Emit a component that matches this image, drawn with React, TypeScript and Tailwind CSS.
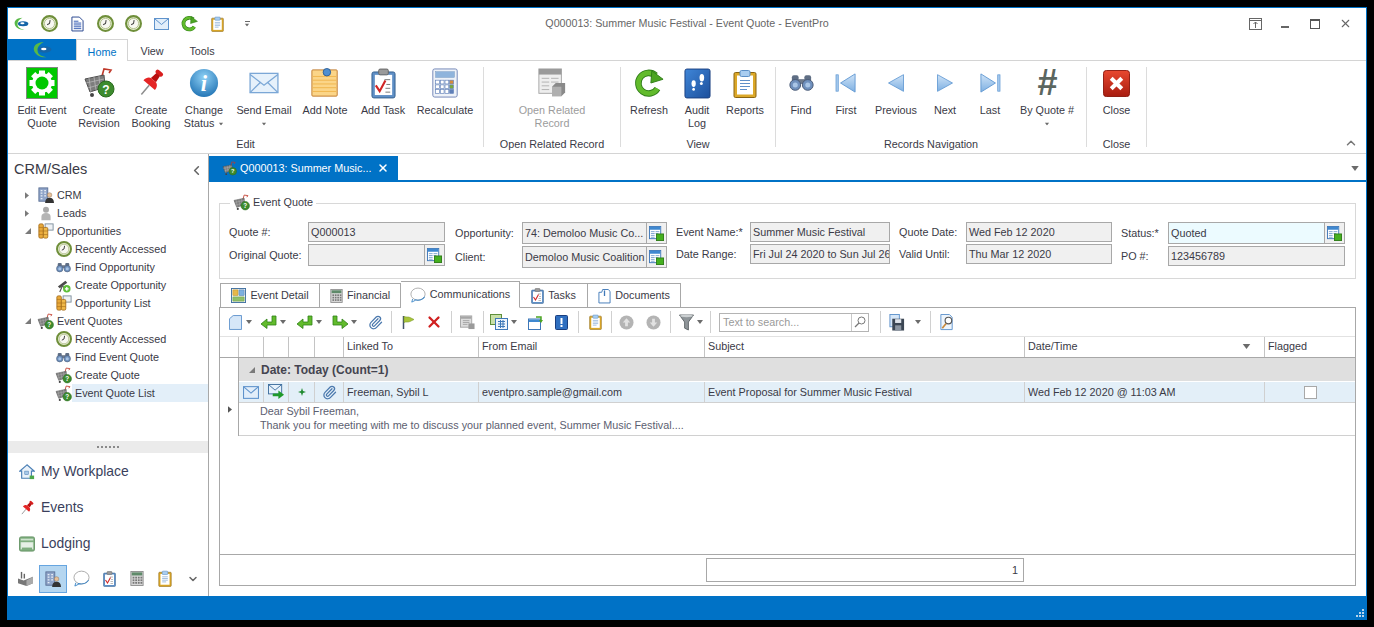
import { Paperclip, ChevronUp, ChevronDown, ChevronLeft, X } from 'lucide-react';

type IconProps = { c?: string };

const Caret = ({ c = '' }: IconProps) => (
  <svg viewBox="0 0 6 4" className={`w-[6px] h-[4px] ${c}`}><path d="M0 0h6L3 4z" fill="#6b6b6b" /></svg>
);

const Logo = ({ c }: IconProps) => (
  <svg viewBox="0 0 22 20" className={c}>
    <path d="M13 1C6 1 1 5 2 10c1 5 7 9 14 8-6-1-10-3-10-8 0-4 3-7 7-9z" fill="#58b947" />
    <ellipse cx="14" cy="9.500" rx="7.500" ry="3.600" fill="#1565a8" />
    <ellipse cx="13" cy="8.800" rx="3" ry="1.400" fill="#fff" />
  </svg>
);

const Clock = ({ c }: IconProps) => (
  <svg viewBox="0 0 16 16" className={c}>
    <circle cx="8" cy="8" r="7" fill="#e8eed6" stroke="#6f8f3a" strokeWidth="2" />
    <circle cx="8" cy="8" r="4.800" fill="#f8f8f2" stroke="#a3b577" strokeWidth=".7" />
    <path d="M8.600 4.800 8 8 5.800 9.200" stroke="#444" strokeWidth="1" fill="none" />
  </svg>
);

const DocLines = ({ c }: IconProps) => (
  <svg viewBox="0 0 14 16" className={c}>
    <path d="M1 .5h8l4 4v11H1z" fill="#fff" stroke="#1f3f8a" />
    <path d="M3 5h5M3 7h8M3 9h8M3 11h8M3 13h8" stroke="#2d55b0" />
  </svg>
);

const Mail = ({ c }: IconProps) => (
  <svg viewBox="0 0 28 22" className={c}>
    <rect x="1" y="2" width="26" height="18" fill="#e6f1fb" stroke="#7ba7d6" strokeWidth="1.2" />
    <path d="M1 3l13 10L27 3M1 20l10-10M27 20L17 10" fill="none" stroke="#7ba7d6" strokeWidth="1.2" />
  </svg>
);

const MailSmall = ({ c }: IconProps) => (
  <svg viewBox="0 0 15 12" className={c}>
    <rect x=".5" y=".5" width="14" height="11" fill="#e2eefa" stroke="#5f93cc" />
    <path d="M1 1l6.500 5.500L14 1" fill="none" stroke="#5f93cc" />
  </svg>
);

const Refresh = ({ c }: IconProps) => (
  <svg viewBox="0 0 32 32" className={c}>
    <path d="M25 22a11 11 0 1 1-2-14" fill="none" stroke="#2f7d18" strokeWidth="7" />
    <path d="M25 22a11 11 0 1 1-2-14" fill="none" stroke="#62bb2c" strokeWidth="5" />
    <path d="M19 3l12 9-13 4z" fill="#4ca522" stroke="#2f7d18" />
  </svg>
);

const Clip = ({ c }: IconProps) => (
  <svg viewBox="0 0 24 30" className={c}>
    <rect x="1" y="4" width="22" height="25" rx="1.5" fill="#dca828" stroke="#8a6410" />
    <rect x="4" y="7" width="16" height="19" fill="#fff" />
    <rect x="7" y="2" width="10" height="6" rx="1.5" fill="#a9cdf0" stroke="#5b8fc6" />
    <path d="M7 12h10M7 15h10M7 18h10M7 21h7" stroke="#5f8fc8" />
  </svg>
);

const Gear = ({ c }: IconProps) => (
  <svg viewBox="0 0 32 32" className={c}>
    <rect x=".5" y=".5" width="31" height="31" fill="#00c800" stroke="#7d8a7d" />
    {[0, 45, 90, 135, 180, 225, 270, 315].map((a) => (
      <rect key={a} x="13" y="3.5" width="6" height="6" fill="#fff" transform={`rotate(${a} 16 16)`} />
    ))}
    <circle cx="16" cy="16" r="10" fill="#fff" />
    <circle cx="16" cy="16" r="6.5" fill="#00c800" />
  </svg>
);

const Cart = ({ c }: IconProps) => (
  <svg viewBox="0 0 32 32" className={c}>
    <path d="M19 9l2-7 7 1-2 3" fill="none" stroke="#c0392b" strokeWidth="1.6" />
    <path d="M2 12l19-4 1 12-15 5z" fill="#7d7d7d" stroke="#4f4f4f" />
    <path d="M6 11l2 14M11 10l2 13M16 9l1 12M3 16l18-4M5 21l17-5" stroke="#bdbdbd" strokeWidth=".7" />
    <circle cx="9" cy="28" r="2" fill="#444" />
    <circle cx="23" cy="22" r="8" fill="#3d8b2e" stroke="#2a6a1e" />
    <text x="23" y="26.5" fontSize="12" fontWeight="700" textAnchor="middle" fill="#fff" fontFamily="Liberation Sans">?</text>
  </svg>
);

const Pin = ({ c }: IconProps) => (
  <svg viewBox="0 0 32 32" className={c}>
    <g transform="rotate(40 16 16)">
      <path d="M16 19v13" stroke="#8d8d8d" strokeWidth="1.6" />
      <rect x="11.5" y="0" width="9" height="4.5" rx="2" fill="#d81e1e" />
      <path d="M13.5 4h5l1 8h-7z" fill="#b80f0f" />
      <path d="M8 19c0-5 3-7 5-7h6c2 0 5 2 5 7z" fill="#e52525" />
    </g>
  </svg>
);

const Info = ({ c }: IconProps) => (
  <svg viewBox="0 0 32 32" className={c}>
    <defs>
      <radialGradient id="infoG" cx=".5" cy=".3" r=".8">
        <stop offset="0" stopColor="#8ed0f5" />
        <stop offset="1" stopColor="#1569ad" />
      </radialGradient>
    </defs>
    <circle cx="16" cy="16" r="15" fill="url(#infoG)" />
    <text x="16" y="25" fontSize="24" fontWeight="700" fontStyle="italic" textAnchor="middle" fill="#fff" fontFamily="Liberation Serif">i</text>
  </svg>
);

const Note = ({ c }: IconProps) => (
  <svg viewBox="0 0 30 32" className={c}>
    <rect x="1" y="2" width="27" height="28" rx="1" fill="#fbd588" stroke="#c07a2c" />
    <path d="M2 9h25M2 13h25M2 17h25M2 21h25M2 25h25" stroke="#efb44c" />
    <circle cx="17" cy="4.5" r="4" fill="#4f8fd0" stroke="#2f5f95" />
  </svg>
);

const Task = ({ c }: IconProps) => (
  <svg viewBox="0 0 26 32" className={c}>
    <rect x="1" y="4" width="24" height="27" rx="2" fill="#5f8fc6" stroke="#34608f" />
    <rect x="4" y="7" width="18" height="21" fill="#fff" />
    <rect x="8" y="1" width="10" height="6" rx="1.5" fill="#9a9a9a" stroke="#666" />
    <path d="M5 18l4 6 6-11" fill="none" stroke="#d02525" strokeWidth="2.2" />
    <path d="M14 12h6M16 17h4M15 21h5M15 25h5" stroke="#777" />
  </svg>
);

const Calc = ({ c }: IconProps) => (
  <svg viewBox="0 0 28 32" className={c}>
    <rect x="1" y="1" width="26" height="30" rx="2" fill="#eef2f8" stroke="#6f83b5" />
    <rect x="4" y="4" width="20" height="6" fill="#8fb4dc" stroke="#6f93bd" strokeWidth=".5" />
    {[13, 18, 23].map((y) =>
      [4, 9, 14, 19].map((x) => (
        <rect key={`${x}-${y}`} x={x} y={y} width="4" height="4" fill={x === 19 ? (y === 13 ? '#d78a3a' : y === 18 ? '#7aa83a' : '#5f7fb8') : '#fff'} stroke="#5f7fb8" strokeWidth=".7" />
      ))
    )}
  </svg>
);

const OpenRelated = ({ c }: IconProps) => (
  <svg viewBox="0 0 30 32" className={c}>
    <rect x="1" y="1" width="24" height="26" fill="#eee" stroke="#a5a5a5" />
    <rect x="1" y="1" width="24" height="6" fill="#9a9a9a" />
    <path d="M4 11h8M14 11h8M4 15h8M14 15h8M4 19h8M4 23h8" stroke="#b0b0b0" />
    <path d="M15 20l4-4h10v10l-4 4H15z" fill="#8a8a8a" />
    <path d="M15 20h10v10H15z" fill="#b0b0b0" />
  </svg>
);

const Audit = ({ c }: IconProps) => (
  <svg viewBox="0 0 28 32" className={c}>
    <defs>
      <linearGradient id="auditG" x1="0" y1="0" x2="1" y2="1">
        <stop offset="0" stopColor="#3f86d8" />
        <stop offset="1" stopColor="#1c4f9c" />
      </linearGradient>
    </defs>
    <rect x="1" y="1" width="26" height="30" rx="2" fill="url(#auditG)" stroke="#1a3f80" />
    <ellipse cx="18.5" cy="10" rx="2.4" ry="3.8" fill="#fff" />
    <ellipse cx="18" cy="16" rx="1.5" ry="1.6" fill="#fff" />
    <ellipse cx="10" cy="16" rx="2.2" ry="3.5" fill="#fff" />
    <ellipse cx="10" cy="22" rx="1.4" ry="1.6" fill="#fff" />
  </svg>
);

const Binoculars = ({ c }: IconProps) => (
  <svg viewBox="0 0 26 18" className={c}>
    <rect x="3" y="1" width="7" height="7" rx="2" fill="#5f6e84" />
    <rect x="16" y="1" width="7" height="7" rx="2" fill="#5f6e84" />
    <rect x="9" y="5" width="8" height="5" fill="#6e7a8c" />
    <circle cx="6.5" cy="11" r="5.6" fill="#6f90bd" stroke="#4a5a75" />
    <circle cx="19.5" cy="11" r="5.6" fill="#6f90bd" stroke="#4a5a75" />
    <circle cx="6.5" cy="11" r="2.6" fill="#a9c5e6" />
    <circle cx="19.5" cy="11" r="2.6" fill="#a9c5e6" />
  </svg>
);

const Tri = ({ dir, bar, c }: IconProps & { dir: 'l' | 'r'; bar?: boolean }) => (
  <svg viewBox="0 0 24 22" className={c}>
    <defs>
      <linearGradient id="triG" x1="0" y1="0" x2="0" y2="1">
        <stop offset="0" stopColor="#cfe3f7" />
        <stop offset="1" stopColor="#7eb0e2" />
      </linearGradient>
    </defs>
    {dir === 'l' ? (
      <>
        {bar && <rect x="1" y="2" width="2.5" height="18" fill="#a9cbee" stroke="#5f97d2" strokeWidth=".8" />}
        <path d={bar ? 'M22 1v20L6 11z' : 'M21 1v20L3 11z'} fill="url(#triG)" stroke="#5f97d2" />
      </>
    ) : (
      <>
        {bar && <rect x="20.5" y="2" width="2.5" height="18" fill="#a9cbee" stroke="#5f97d2" strokeWidth=".8" />}
        <path d={bar ? 'M2 1v20l16-10z' : 'M3 1v20l18-10z'} fill="url(#triG)" stroke="#5f97d2" />
      </>
    )}
  </svg>
);

const CloseRed = ({ c }: IconProps) => (
  <svg viewBox="0 0 28 28" className={c}>
    <defs>
      <linearGradient id="closeG" x1="0" y1="0" x2="0" y2="1">
        <stop offset="0" stopColor="#e8482f" />
        <stop offset="1" stopColor="#a81c10" />
      </linearGradient>
    </defs>
    <rect x=".5" y=".5" width="27" height="27" rx="3" fill="url(#closeG)" stroke="#8e1a10" />
    <path d="M8.5 8.5l11 11M19.5 8.5l-11 11" stroke="#fff" strokeWidth="4.2" />
  </svg>
);

const Lookup = ({ c }: IconProps) => (
  <svg viewBox="0 0 16 16" className={c}>
    <rect x=".5" y=".5" width="12" height="13" fill="#fff" stroke="#3f78b8" />
    <rect x="1" y="1" width="11" height="3" fill="#3f88d0" />
    <path d="M2 6h4M7 6h4M2 8h4M7 8h3M2 10h4M2 12h4" stroke="#7da4d0" />
    <rect x="8" y="8.5" width="7.5" height="7" fill="#45b01f" stroke="#2f7d18" />
  </svg>
);

const Crm = ({ c }: IconProps) => (
  <svg viewBox="0 0 18 18" className={c}>
    <rect x="1" y="1" width="10" height="15" fill="#8fa4c8" stroke="#5a6f95" />
    <path d="M3 4h2M7 4h2M3 7h2M7 7h2M3 10h2M7 10h2M3 13h2" stroke="#e7edf6" strokeWidth="1.4" />
    <circle cx="13" cy="9" r="2.6" fill="#e6c09a" stroke="#8a6a4a" strokeWidth=".5" />
    <path d="M8 18c0-4 2-6 5-6s5 2 5 6z" fill="#333" />
  </svg>
);

const Lead = ({ c }: IconProps) => (
  <svg viewBox="0 0 14 18" className={c}>
    <circle cx="7" cy="4.500" r="3.600" fill="#a9a9a9" />
    <path d="M1.500 17v-4c0-3 2-4.500 5.500-4.500S12.500 10 12.500 13v4z" fill="#b5b5b5" />
  </svg>
);

const Opp = ({ c }: IconProps) => (
  <svg viewBox="0 0 18 18" className={c}>
    <rect x="8" y="1" width="9" height="7" fill="#eef1f4" stroke="#7a8a99" />
    <rect x="1" y="1" width="5" height="16" rx="1.500" fill="#e9a93a" stroke="#a8701c" />
    <rect x="6" y="5" width="5" height="12" rx="1.500" fill="#f0b94a" stroke="#a8701c" />
    <path d="M1 5h5M1 9h5M1 13h5M6 9h5M6 13h5" stroke="#a8701c" strokeWidth=".7" />
  </svg>
);

const CreateOpp = ({ c }: IconProps) => (
  <svg viewBox="0 0 16 16" className={c}>
    <path d="M2 9l8-6 2 2-8 6z" fill="#4a4a4a" />
    <path d="M7 8l-3 7M7 8l3 5" stroke="#555" strokeWidth="1.200" />
    <circle cx="11.500" cy="11.500" r="4" fill="#5fbf3a" />
    <path d="M9.500 11.500h4M11.500 9.500v4" stroke="#fff" strokeWidth="1.400" />
  </svg>
);

const House = ({ c }: IconProps) => (
  <svg viewBox="0 0 18 18" className={c}>
    <path d="M9 1L1 8h2v8h11V8h3z" fill="#eaf2fa" stroke="#4a7fb5" strokeWidth="1.300" />
    <rect x="6.500" y="8" width="4" height="4" fill="#a9c9e8" stroke="#4a7fb5" strokeWidth=".6" />
    <rect x="12" y="13" width="5" height="4" fill="#4ca84a" />
  </svg>
);

const Lodging = ({ c }: IconProps) => (
  <svg viewBox="0 0 18 18" className={c}>
    <rect x=".5" y="1" width="17" height="16" rx="2" fill="#7fae7f" stroke="#5f8f5f" />
    <rect x="2" y="3" width="14" height="2" fill="#cfe3cf" />
    <rect x="3" y="7" width="12" height="6" fill="#e6f0e6" />
    <rect x="2" y="7" width="1" height="8" fill="#fff" />
    <rect x="15" y="7" width="1" height="8" fill="#fff" />
  </svg>
);

const Factory = ({ c }: IconProps) => (
  <svg viewBox="0 0 18 16" className={c}>
    <rect x="4" y="1" width="1.500" height="7" fill="#666" />
    <rect x="7" y="3" width="1.500" height="5" fill="#666" />
    <path d="M1 8l6 2 10-4v7l-7 3-9-3z" fill="#777" />
    <path d="M10 10l7-4v7l-7 3z" fill="#aaa" />
  </svg>
);

const Bubble = ({ c }: IconProps) => (
  <svg viewBox="0 0 18 18" className={c}>
    <ellipse cx="9" cy="8" rx="8" ry="6.800" fill="#fff" stroke="#a8a8a8" />
    <path d="M3 13.500l-1 3.500 4-2" fill="#fff" stroke="#3f88c8" />
    <path d="M5 14.400c4 1 9 0 11.500-3.500" fill="none" stroke="#3f88c8" strokeWidth="1.200" />
  </svg>
);

const CalcGray = ({ c }: IconProps) => (
  <svg viewBox="0 0 16 18" className={c}>
    <rect x="1" y="1" width="14" height="16" fill="#d7d7d7" stroke="#8a8a8a" />
    <rect x="2" y="2" width="12" height="3.500" fill="#5f8a6a" />
    {[7, 10, 13].map((y) =>
      [3, 6, 9, 12].map((x) => <rect key={`${x}-${y}`} x={x} y={y} width="2" height="2" fill="#777" />)
    )}
  </svg>
);

const Detail = ({ c }: IconProps) => (
  <svg viewBox="0 0 16 16" className={c}>
    <rect x=".5" y=".5" width="15" height="15" fill="#fff" stroke="#3f6f9f" />
    <rect x="2" y="2" width="5.500" height="6" fill="#e6b84a" stroke="#a8801c" strokeWidth=".5" />
    <rect x="8.500" y="2" width="5.500" height="6" fill="#7db0e0" stroke="#3f6f9f" strokeWidth=".5" />
    <rect x="2" y="9.500" width="12" height="4.500" fill="#8fc06a" stroke="#5f8f3a" strokeWidth=".5" />
  </svg>
);

const Documents = ({ c }: IconProps) => (
  <svg viewBox="0 0 14 16" className={c}>
    <path d="M1 4h3l1-3h6l2 2v12.500H1z" fill="#fff" stroke="#3f78b8" />
    <path d="M7 2v6" stroke="#3f78b8" strokeWidth="1.400" />
  </svg>
);

const Reply = ({ c, forward }: IconProps & { forward?: boolean }) => (
  <svg viewBox="0 0 18 14" className={c}>
    <path
      d={forward ? 'M17 9l-6-5v3H6V1H2v9h9v3.500z' : 'M1 9l6-5v3h5V1h4v9H7v3.500z'}
      fill="#62bb2c"
      stroke="#2f8018"
      strokeWidth=".8"
    />
  </svg>
);

const NewDoc = ({ c }: IconProps) => (
  <svg viewBox="0 0 14 16" className={c}>
    <path d="M.5 4l4-3.500h9v15H.5z" fill="#d6e7f8" stroke="#5f93cc" />
  </svg>
);

const Flag = ({ c }: IconProps) => (
  <svg viewBox="0 0 14 14" className={c}>
    <path d="M2.500 1v13" stroke="#44546a" strokeWidth="1.500" />
    <path d="M3 1.500c3 1 4 0 6 1l4 2-4 2c-2 1-4 0-6 1z" fill="#a9c53a" stroke="#7c9a2a" strokeWidth=".6" />
  </svg>
);

const GrayDoc = ({ c }: IconProps) => (
  <svg viewBox="0 0 16 16" className={c}>
    <rect x=".5" y="1" width="12" height="12" fill="#ddd" stroke="#a5a5a5" />
    <rect x="1" y="1.500" width="11" height="2.500" fill="#a5a5a5" />
    <path d="M3 6h7M3 8h7M3 10h5" stroke="#a5a5a5" />
    <rect x="9" y="9" width="6.500" height="6" fill="#9a9a9a" />
  </svg>
);

const GridGreen = ({ c }: IconProps) => (
  <svg viewBox="0 0 18 16" className={c}>
    <rect x=".5" y=".5" width="11" height="10" fill="#c9e0a8" stroke="#5f8f3a" />
    <rect x="5.500" y="4.500" width="12" height="11" fill="#eef5fc" stroke="#3f78b8" />
    <path d="M8 7.500h7M8 10h7M8 12.500h7M10.500 6v8M13 6v8" stroke="#3f78b8" />
  </svg>
);

const RestoreWin = ({ c }: IconProps) => (
  <svg viewBox="0 0 16 16" className={c}>
    <rect x=".5" y="5" width="12" height="10.500" fill="#fff" stroke="#3f78b8" />
    <rect x="1" y="5.500" width="11" height="2.500" fill="#3f88d0" />
    <path d="M8 3h5v4" fill="none" stroke="#4ca522" strokeWidth="1.500" />
    <path d="M11 6h4l-2 3z" fill="#4ca522" />
  </svg>
);

const BookExcl = ({ c }: IconProps) => (
  <svg viewBox="0 0 13 15" className={c}>
    <rect x=".5" y=".5" width="12" height="14" rx="1" fill="#2f6fc0" stroke="#1a3f80" />
    <rect x="5.500" y="3" width="2" height="6" fill="#fff" />
    <rect x="5.500" y="10" width="2" height="2" fill="#fff" />
  </svg>
);

const RoundArrow = ({ up, c }: IconProps & { up?: boolean }) => (
  <svg viewBox="0 0 16 16" className={c}>
    <circle cx="8" cy="8" r="7.500" fill="#b4b4b4" />
    <path d={up ? 'M8 3.500L4 8h2.500v4h3V8H12z' : 'M8 12.500L4 8h2.500V4h3v4H12z'} fill="#e2e2e2" />
  </svg>
);

const Funnel = ({ c }: IconProps) => (
  <svg viewBox="0 0 16 18" className={c}>
    <path d="M.5 1h15L10 8.500V17l-4-2V8.500z" fill="#8f9599" stroke="#5f6569" />
    <ellipse cx="8" cy="2" rx="7" ry="1.300" fill="#ccd0d2" />
  </svg>
);

const Save = ({ c }: IconProps) => (
  <svg viewBox="0 0 16 18" className={c}>
    <rect x=".5" y=".5" width="10" height="13" fill="#d6e7f8" stroke="#5f93cc" />
    <rect x="3" y="5" width="12.500" height="12.500" fill="#3b4654" />
    <rect x="6" y="5.500" width="6.500" height="4" fill="#dfe4ea" />
    <rect x="6" y="12" width="6.500" height="5.500" fill="#8c96a2" />
  </svg>
);

const SearchDoc = ({ c }: IconProps) => (
  <svg viewBox="0 0 14 18" className={c}>
    <path d="M.5.500h9l3 3v13H.500z" fill="#eef5fc" stroke="#5f93cc" />
    <circle cx="8.500" cy="7" r="3.500" fill="#fff" stroke="#555" strokeWidth="1.200" />
    <path d="M6 10l-4 5" stroke="#c98a3c" strokeWidth="1.800" />
  </svg>
);

const Magnifier = ({ c }: IconProps) => (
  <svg viewBox="0 0 12 12" className={c}>
    <circle cx="7.500" cy="4.500" r="3.500" fill="none" stroke="#777" />
    <path d="M5 7L1 11" stroke="#777" strokeWidth="1.200" />
  </svg>
);

const MailArrow = ({ c }: IconProps) => (
  <svg viewBox="0 0 18 17" className={c}>
    <rect x=".5" y=".5" width="14" height="10" fill="#e6f1fb" stroke="#3f6f9f" />
    <path d="M1 1l6.500 5.500L14 1" fill="none" stroke="#3f6f9f" />
    <path d="M5 10h6V7l6 4.500-6 4.500v-3H5z" fill="#1f9a2a" />
  </svg>
);

const Spark = ({ c }: IconProps) => (
  <svg viewBox="0 0 8 8" className={c}>
    <path d="M4 0l1 3 3 1-3 1-1 3-1-3-3-1 3-1z" fill="#1f8a2f" />
  </svg>
);

function RibbonItem({ w, icon, label, dim, caret }: { w: string; icon: React.ReactNode; label: string[]; dim?: boolean; caret?: boolean }) {
  return (
    <div className={`${w} flex flex-col items-center shrink-0`}>
      <div className="h-[32px] flex items-center justify-center">{icon}</div>
      <div className={`mt-[5px] text-center leading-[13px] ${dim ? 'text-[#9c9c9c]' : ''}`}>
        {label.map((l, i) => (
          <div key={l} className="whitespace-nowrap flex items-center justify-center gap-[4px]">
            {l}
            {caret && label.length === 2 && i === 1 && <Caret c="scale-75" />}
          </div>
        ))}
        {caret && label.length === 1 && (
          <div className="h-[13px] flex items-center justify-center"><Caret c="scale-75" /></div>
        )}
      </div>
    </div>
  );
}

function RibbonGroup({ w, label, children }: { w: string; label: string; children: React.ReactNode }) {
  return (
    <div className={`${w} h-[80px] border-r border-[#dcdcdc] flex flex-col shrink-0`}>
      <div className="h-[70px] flex shrink-0">{children}</div>
      <div className="h-[14px] leading-[14px] text-center whitespace-nowrap shrink-0">{label}</div>
    </div>
  );
}

function TreeRow({ level, icon, label, arrow, selected }: { level: 1 | 2; icon: React.ReactNode; label: string; arrow?: 'open' | 'closed'; selected?: boolean }) {
  return (
    <div className={`h-[18px] flex items-center ${level === 1 ? 'pl-[17px]' : 'pl-[47px]'}`}>
      {level === 1 && (
        <div className="w-[12px] flex justify-start">
          {arrow === 'closed' ? (
            <svg viewBox="0 0 5 8" className="w-[4px] h-[7px]"><path d="M0 0l5 4-5 4z" fill="#7a7a7a" /></svg>
          ) : (
            <svg viewBox="0 0 7 7" className="w-[6px] h-[6px]"><path d="M7 0v7H0z" fill="#7a7a7a" /></svg>
          )}
        </div>
      )}
      <div className="w-[17px] h-[17px] flex items-center justify-center shrink-0">{icon}</div>
      <div className={`h-[18px] leading-[18px] flex-1 pl-[3px] ${selected ? 'bg-[#e3eff9]' : ''}`}>{label}</div>
    </div>
  );
}

function Field({ label, value, lw, iw, h, button, tint }: { label: string; value?: string; lw: string; iw: string; h: string; button?: boolean; tint?: boolean }) {
  return (
    <div className="flex items-center">
      <div className={`${lw} shrink-0 whitespace-nowrap`}>{label}</div>
      <div className={`${iw} ${h} shrink-0 flex items-stretch border border-[#a8a8a8] ${tint ? 'bg-[#ecfbff]' : 'bg-[#f0f0f0]'}`}>
        <div className="flex-1 min-w-0 px-[2px] flex items-center overflow-hidden whitespace-nowrap">{value}</div>
        {button && (
          <div className="w-[20px] border-l border-[#a8a8a8] bg-[#f0f0f0] flex items-center justify-center">
            <Lookup c="w-[15px] h-[15px]" />
          </div>
        )}
      </div>
    </div>
  );
}

function PageTab({ w, icon, label, active }: { w: string; icon: React.ReactNode; label: string; active?: boolean }) {
  return (
    <div className={`${w} flex items-center justify-center gap-[4px] border border-[#a8a8a8] border-l-0 first:border-l ${active ? 'h-[27px] -mb-px bg-white border-b-white relative' : 'h-[24px] border-b-0'}`}>
      {icon}
      <span className="whitespace-nowrap">{label}</span>
    </div>
  );
}

const Sep = ({ c = '' }: IconProps) => <div className={`w-px h-[22px] bg-[#d0d0d0] shrink-0 ${c}`} />;

function HeadCell({ w, label, children }: { w: string; label?: string; children?: React.ReactNode }) {
  return (
    <div className={`${w} h-full border-r border-[#c4c4c4] flex items-center pl-[3px] pb-[2px] shrink-0`}>
      {label}
      {children}
    </div>
  );
}

function DataCell({ w, children, center }: { w: string; children?: React.ReactNode; center?: boolean }) {
  return (
    <div className={`${w} h-full border-r border-[#d0d0d0] flex items-center shrink-0 whitespace-nowrap ${center ? 'justify-center' : 'pl-[3px]'}`}>
      {children}
    </div>
  );
}

export default function App() {
  return (
    <div className="w-[1374px] h-[627px] bg-black p-[7px] overflow-hidden font-['Liberation_Sans',sans-serif] text-[10.8px] text-[#3a3a46]">
      <div className="h-[613px] bg-white border-x border-t border-[#0072c6] flex flex-col">
        {/* Title bar */}
        <div className="h-[31px] flex items-center shrink-0">
          <div className="w-[260px] flex items-center pl-[5px]">
            <div className="w-[16px] flex justify-center"><Logo c="w-[16px] h-[14px]" /></div>
            <div className="w-[28px] ml-[6px] flex justify-center"><Clock c="w-[17px] h-[17px]" /></div>
            <div className="w-[28px] flex justify-center"><DocLines c="w-[13px] h-[16px]" /></div>
            <div className="w-[28px] flex justify-center"><Clock c="w-[17px] h-[17px]" /></div>
            <div className="w-[28px] flex justify-center"><Clock c="w-[17px] h-[17px]" /></div>
            <div className="w-[28px] flex justify-center"><MailSmall c="w-[15px] h-[12px]" /></div>
            <div className="w-[28px] flex justify-center"><Refresh c="w-[17px] h-[17px]" /></div>
            <div className="w-[28px] flex justify-center"><Clip c="w-[13px] h-[16px]" /></div>
            <div className="w-[32px] flex flex-col items-center gap-[1px]">
              <div className="w-[5px] h-px bg-[#6b6b6b]" />
              <Caret c="scale-75" />
            </div>
          </div>
          <div className="flex-1 text-center text-[10.7px] text-[#666] whitespace-nowrap">Q000013: Summer Music Festival - Event Quote - EventPro</div>
          <div className="w-[260px] flex items-center justify-end pr-[6px] text-[#666]">
            <div className="w-[30px] flex justify-center">
              <svg viewBox="0 0 13 12" className="w-[13px] h-[12px]">
                <rect x=".5" y=".5" width="12" height="11" fill="none" stroke="#666" />
                <path d="M.5 2.500h12M6.500 10V4M4.500 6l2-2 2 2" fill="none" stroke="#666" />
              </svg>
            </div>
            <div className="w-[30px] flex justify-center pt-[6px]"><div className="w-[8px] h-[2px] bg-[#666]" /></div>
            <div className="w-[30px] flex justify-center">
              <div className="w-[10px] h-[10px] border border-t-2 border-[#555]" />
            </div>
            <div className="w-[30px] flex justify-center"><X className="w-[13px] h-[13px]" strokeWidth={2} /></div>
          </div>
        </div>

        {/* Ribbon tabs */}
        <div className="h-[22px] flex border-b border-[#d4d4d4] shrink-0">
          <div className="w-[68px] bg-[#0072c6] flex items-center justify-center"><Logo c="w-[22px] h-[18px]" /></div>
          <div className="w-[52px] h-[22px] pt-[3px] bg-white border-x border-t border-[#d4d4d4] flex items-center justify-center text-[#0072c6]">Home</div>
          <div className="w-[48px] pt-[3px] flex items-center justify-center">View</div>
          <div className="w-[52px] pt-[3px] flex items-center justify-center">Tools</div>
        </div>

        {/* Ribbon */}
        <div className="h-[93px] border-b border-[#d4d4d4] pt-[6px] flex shrink-0">
          <RibbonGroup w="w-[476px]" label="Edit">
            <RibbonItem w="w-[68px]" icon={<Gear c="w-[32px] h-[32px]" />} label={['Edit Event', 'Quote']} />
            <RibbonItem w="w-[46px]" icon={<Cart c="w-[32px] h-[32px]" />} label={['Create', 'Revision']} />
            <RibbonItem w="w-[58px]" icon={<Pin c="w-[30px] h-[32px]" />} label={['Create', 'Booking']} />
            <RibbonItem w="w-[48px]" icon={<Info c="w-[30px] h-[30px]" />} label={['Change', 'Status']} caret />
            <RibbonItem w="w-[72px]" icon={<Mail c="w-[30px] h-[24px]" />} label={['Send Email']} caret />
            <RibbonItem w="w-[50px]" icon={<Note c="w-[30px] h-[30px]" />} label={['Add Note']} />
            <RibbonItem w="w-[66px]" icon={<Task c="w-[25px] h-[31px]" />} label={['Add Task']} />
            <RibbonItem w="w-[58px]" icon={<Calc c="w-[28px] h-[30px]" />} label={['Recalculate']} />
          </RibbonGroup>
          <RibbonGroup w="w-[137px]" label="Open Related Record">
            <RibbonItem w="w-[136px]" icon={<OpenRelated c="w-[30px] h-[30px]" />} label={['Open Related', 'Record']} dim />
          </RibbonGroup>
          <RibbonGroup w="w-[155px]" label="View">
            <RibbonItem w="w-[56px]" icon={<Refresh c="w-[30px] h-[30px]" />} label={['Refresh']} />
            <RibbonItem w="w-[40px]" icon={<Audit c="w-[27px] h-[31px]" />} label={['Audit', 'Log']} />
            <RibbonItem w="w-[56px]" icon={<Clip c="w-[24px] h-[31px]" />} label={['Reports']} />
          </RibbonGroup>
          <RibbonGroup w="w-[311px]" label="Records Navigation">
            <RibbonItem w="w-[50px]" icon={<Binoculars c="w-[25px] h-[18px]" />} label={['Find']} />
            <RibbonItem w="w-[40px]" icon={<Tri dir="l" bar c="w-[22px] h-[20px]" />} label={['First']} />
            <RibbonItem w="w-[60px]" icon={<Tri dir="l" c="w-[20px] h-[20px]" />} label={['Previous']} />
            <RibbonItem w="w-[38px]" icon={<Tri dir="r" c="w-[20px] h-[20px]" />} label={['Next']} />
            <RibbonItem w="w-[52px]" icon={<Tri dir="r" bar c="w-[22px] h-[20px]" />} label={['Last']} />
            <RibbonItem w="w-[62px]" icon={<span className="text-[36px] leading-[32px] font-bold italic text-[#5b6660]">#</span>} label={['By Quote #']} caret />
          </RibbonGroup>
          <RibbonGroup w="w-[60px]" label="Close">
            <RibbonItem w="w-[59px]" icon={<CloseRed c="w-[27px] h-[27px]" />} label={['Close']} />
          </RibbonGroup>
          <div className="flex-1 flex justify-end items-end pr-[8px] pb-[3px]">
            <ChevronUp className="w-[14px] h-[14px] text-[#777]" strokeWidth={2.5} />
          </div>
        </div>

        <div className="flex-1 flex min-h-0">
          {/* Sidebar */}
          <div className="w-[201px] border-r border-[#a8a8a8] flex flex-col shrink-0">
            <div className="h-[32px] flex items-center justify-between pl-[6px] pr-[4px] text-[14.5px]">
              <span>CRM/Sales</span>
              <ChevronLeft className="w-[15px] h-[15px] text-[#666]" strokeWidth={2.5} />
            </div>
            <div className="flex-1">
              <TreeRow level={1} arrow="closed" icon={<Crm c="w-[16px] h-[16px]" />} label="CRM" />
              <TreeRow level={1} arrow="closed" icon={<Lead c="w-[12px] h-[15px]" />} label="Leads" />
              <TreeRow level={1} arrow="open" icon={<Opp c="w-[16px] h-[16px]" />} label="Opportunities" />
              <TreeRow level={2} icon={<Clock c="w-[16px] h-[16px]" />} label="Recently Accessed" />
              <TreeRow level={2} icon={<Binoculars c="w-[15px] h-[11px]" />} label="Find Opportunity" />
              <TreeRow level={2} icon={<CreateOpp c="w-[15px] h-[15px]" />} label="Create Opportunity" />
              <TreeRow level={2} icon={<Opp c="w-[16px] h-[16px]" />} label="Opportunity List" />
              <TreeRow level={1} arrow="open" icon={<Cart c="w-[17px] h-[17px]" />} label="Event Quotes" />
              <TreeRow level={2} icon={<Clock c="w-[16px] h-[16px]" />} label="Recently Accessed" />
              <TreeRow level={2} icon={<Binoculars c="w-[15px] h-[11px]" />} label="Find Event Quote" />
              <TreeRow level={2} icon={<Cart c="w-[17px] h-[17px]" />} label="Create Quote" />
              <TreeRow level={2} icon={<Cart c="w-[17px] h-[17px]" />} label="Event Quote List" selected />
            </div>
            <div className="h-[12px] bg-[#ebebeb] flex items-center justify-center gap-[2px] shrink-0">
              {[0, 1, 2, 3, 4, 5].map((i) => (
                <div key={i} className="w-[2px] h-[2px] bg-[#8a8a8a]" />
              ))}
            </div>
            <div className="text-[13.9px] text-[#3a3f5c]">
              <div className="h-[36px] flex items-center pl-[11px] pt-[1px] gap-[6px]"><House c="w-[16px] h-[16px]" />My Workplace</div>
              <div className="h-[36px] flex items-center pl-[11px] pt-[1px] gap-[6px]"><Pin c="w-[16px] h-[16px]" />Events</div>
              <div className="h-[36px] flex items-center pl-[11px] pt-[1px] gap-[6px]"><Lodging c="w-[16px] h-[16px]" />Lodging</div>
            </div>
            <div className="h-[35px] flex items-center pl-[3px] shrink-0">
              <div className="w-[28px] h-[28px] flex items-center justify-center"><Factory c="w-[17px] h-[15px]" /></div>
              <div className="w-[28px] h-[28px] flex items-center justify-center bg-[#b5d6f0] border border-[#66a5e0]"><Crm c="w-[16px] h-[16px]" /></div>
              <div className="w-[28px] h-[28px] flex items-center justify-center"><Bubble c="w-[17px] h-[17px]" /></div>
              <div className="w-[28px] h-[28px] flex items-center justify-center"><Task c="w-[13px] h-[16px]" /></div>
              <div className="w-[28px] h-[28px] flex items-center justify-center"><CalcGray c="w-[14px] h-[17px]" /></div>
              <div className="w-[28px] h-[28px] flex items-center justify-center"><Clip c="w-[14px] h-[17px]" /></div>
              <div className="w-[28px] h-[28px] flex items-center justify-center"><ChevronDown className="w-[12px] h-[12px] text-[#666]" strokeWidth={3} /></div>
            </div>
          </div>

          {/* Content */}
          <div className="flex-1 flex flex-col min-w-0">
            <div className="h-[28px] pt-[2px] border-b-2 border-[#0072c6] flex items-end justify-between shrink-0">
              <div className="w-[189px] h-[24px] bg-[#0072c6] text-white flex items-center pl-[13px] pr-[9px]">
                <Cart c="w-[15px] h-[15px]" />
                <span className="ml-[3px] flex-1 whitespace-nowrap">Q000013: Summer Music...</span>
                <X className="w-[12px] h-[12px]" strokeWidth={3} />
              </div>
              <div className="self-center pr-[7px]"><Caret c="w-[8px] h-[5px]" /></div>
            </div>

            <div className="flex-1 flex flex-col px-[10px] pb-[10px] min-h-0">
              {/* Event Quote header */}
              <fieldset className="h-[84px] mt-[13px] border border-[#d8d8d8] pl-[9px] pt-[11px] shrink-0">
                <legend className="ml-px px-[3px] h-[16px] pb-[2px] flex items-center gap-[3px]">
                  <Cart c="w-[17px] h-[17px]" />
                  Event Quote
                </legend>
                <div className="flex">
                  <div className="flex flex-col gap-[2px]">
                    <Field label="Quote #:" value="Q000013" lw="w-[79px]" iw="w-[137px]" h="h-[20px]" />
                    <Field label="Original Quote:" lw="w-[79px]" iw="w-[137px]" h="h-[22px]" button />
                  </div>
                  <div className="ml-[10px] flex flex-col gap-[2px]">
                    <Field label="Opportunity:" value="74: Demoloo Music Co..." lw="w-[67px]" iw="w-[145px]" h="h-[22px]" button />
                    <Field label="Client:" value="Demoloo Music Coalition" lw="w-[67px]" iw="w-[145px]" h="h-[22px]" button />
                  </div>
                  <div className="ml-[9px] flex flex-col gap-[2px]">
                    <Field label="Event Name:*" value="Summer Music Festival" lw="w-[74px]" iw="w-[140px]" h="h-[20px]" />
                    <Field label="Date Range:" value="Fri Jul 24 2020 to Sun Jul 26 2020" lw="w-[74px]" iw="w-[140px]" h="h-[20px]" />
                  </div>
                  <div className="ml-[9px] flex flex-col gap-[2px]">
                    <Field label="Quote Date:" value="Wed Feb 12 2020" lw="w-[67px]" iw="w-[146px]" h="h-[20px]" />
                    <Field label="Valid Until:" value="Thu Mar 12 2020" lw="w-[67px]" iw="w-[146px]" h="h-[20px]" />
                  </div>
                  <div className="ml-[9px] flex flex-col gap-[2px]">
                    <Field label="Status:*" value="Quoted" lw="w-[47px]" iw="w-[177px]" h="h-[22px]" button tint />
                    <Field label="PO #:" value="123456789" lw="w-[47px]" iw="w-[177px]" h="h-[20px]" />
                  </div>
                </div>
              </fieldset>

              {/* Detail tabs */}
              <div className="h-[26px] mt-[2px] pl-px flex items-end shrink-0">
                <PageTab w="w-[100px]" icon={<Detail c="w-[15px] h-[15px]" />} label="Event Detail" />
                <PageTab w="w-[81px]" icon={<CalcGray c="w-[13px] h-[16px]" />} label="Financial" />
                <PageTab w="w-[119px]" icon={<Bubble c="w-[16px] h-[16px]" />} label="Communications" active />
                <PageTab w="w-[68px]" icon={<Task c="w-[13px] h-[16px]" />} label="Tasks" />
                <PageTab w="w-[93px]" icon={<Documents c="w-[13px] h-[16px]" />} label="Documents" />
              </div>

              <div className="flex-1 border border-[#a8a8a8] flex flex-col min-h-0">
                {/* Grid toolbar */}
                <div className="h-[28px] flex items-center pl-[5px] shrink-0">
                  <div className="w-[30px] flex items-center justify-center gap-[4px]"><NewDoc c="w-[13px] h-[15px]" /><Caret /></div>
                  <div className="w-[36px] flex items-center justify-center gap-[2px]"><Reply c="w-[18px] h-[14px]" /><Caret /></div>
                  <div className="w-[35px] flex items-center justify-center gap-[2px]"><Reply c="w-[18px] h-[14px]" /><Caret /></div>
                  <div className="w-[35px] flex items-center justify-center gap-[2px]"><Reply forward c="w-[18px] h-[14px]" /><Caret /></div>
                  <div className="w-[28px] flex justify-center"><Paperclip className="w-[15px] h-[15px] text-[#4a78ad]" /></div>
                  <Sep c="ml-[2px]" />
                  <div className="w-[31px] flex justify-center"><Flag c="w-[14px] h-[14px]" /></div>
                  <div className="w-[22px] flex justify-center"><X className="w-[18px] h-[18px] text-[#d02020]" strokeWidth={3} /></div>
                  <Sep c="ml-[6px]" />
                  <div className="w-[30px] flex justify-center"><GrayDoc c="w-[15px] h-[15px]" /></div>
                  <Sep c="ml-px" />
                  <div className="w-[38px] flex items-center justify-center gap-[3px]"><GridGreen c="w-[18px] h-[16px]" /><Caret /></div>
                  <div className="w-[27px] flex justify-center"><RestoreWin c="w-[16px] h-[16px]" /></div>
                  <div className="w-[24px] flex justify-center"><BookExcl c="w-[13px] h-[15px]" /></div>
                  <Sep c="ml-[5px]" />
                  <div className="w-[32px] flex justify-center"><Clip c="w-[13px] h-[16px]" /></div>
                  <Sep />
                  <div className="w-[29px] flex justify-center"><RoundArrow up c="w-[15px] h-[15px]" /></div>
                  <div className="w-[24px] flex justify-center"><RoundArrow c="w-[15px] h-[15px]" /></div>
                  <Sep c="ml-[5px]" />
                  <div className="w-[39px] flex items-center justify-center gap-[3px]"><Funnel c="w-[15px] h-[17px]" /><Caret /></div>
                  <Sep />
                  <div className="ml-[8px] w-[150px] h-[19px] border border-[#b4b4b4] flex items-center justify-between text-[#9a9a9a] pl-[3px] shrink-0">
                    Text to search...
                    <div className="w-[17px] h-full border-l border-[#c8c8c8] flex items-center justify-center"><Magnifier c="w-[12px] h-[12px]" /></div>
                  </div>
                  <Sep c="ml-[11px]" />
                  <div className="w-[49px] flex items-center pl-[8px] gap-[10px]"><Save c="w-[16px] h-[17px]" /><Caret /></div>
                  <Sep />
                  <div className="w-[32px] flex justify-center"><SearchDoc c="w-[14px] h-[17px]" /></div>
                </div>

                {/* Grid header */}
                <div className="h-[22px] flex border-y border-y-[#a8a8a8] border-t-[#e2e2e2] shrink-0 leading-none">
                  <HeadCell w="w-[19px]" />
                  <HeadCell w="w-[25px]" />
                  <HeadCell w="w-[25px]" />
                  <HeadCell w="w-[26px]" />
                  <HeadCell w="w-[29px]" />
                  <HeadCell w="w-[135px]" label="Linked To" />
                  <HeadCell w="w-[226px]" label="From Email" />
                  <HeadCell w="w-[320px]" label="Subject" />
                  <HeadCell w="w-[240px]">
                    <span className="flex-1">Date/Time</span>
                    <Caret c="w-[9px] h-[5px] mr-[13px]" />
                  </HeadCell>
                  <div className="flex-1 flex items-center pl-[3px] pb-[2px]">Flagged</div>
                </div>

                {/* Grid body */}
                <div className="flex-1 flex flex-col min-h-0">
                  <div className="flex">
                    <div className="w-[19px] border-r border-[#a8a8a8] flex flex-col justify-end items-center shrink-0 pb-[23px]">
                      <svg viewBox="0 0 5 8" className="w-[4px] h-[7px] ml-[2px]"><path d="M0 0l5 4-5 4z" fill="#555" /></svg>
                    </div>
                    <div className="flex-1 min-w-0">
                      <div className="h-[24px] bg-[#dfdfdf] border-b border-white flex items-center font-bold text-[#44444f] pl-[10px] gap-[5px]">
                        <svg viewBox="0 0 7 7" className="w-[6px] h-[6px]"><path d="M7 0v7H0z" fill="#7a7a7a" /></svg>
                        <span className="text-[12px] ml-[1px]">Date: Today (Count=1)</span>
                      </div>
                      <div className="h-[21px] bg-[#e3eff8] border-b border-[#d0d0d0] flex">
                        <DataCell w="w-[25px]" center><MailSmall c="w-[16px] h-[13px]" /></DataCell>
                        <DataCell w="w-[25px]" center><MailArrow c="w-[17px] h-[16px]" /></DataCell>
                        <DataCell w="w-[26px]" center><Spark c="w-[8px] h-[8px]" /></DataCell>
                        <DataCell w="w-[29px]" center><Paperclip className="w-[15px] h-[15px] text-[#4a78ad]" /></DataCell>
                        <DataCell w="w-[135px]">Freeman, Sybil L</DataCell>
                        <DataCell w="w-[226px]">eventpro.sample@gmail.com</DataCell>
                        <DataCell w="w-[320px]">Event Proposal for Summer Music Festival</DataCell>
                        <DataCell w="w-[240px]">Wed Feb 12 2020 @ 11:03 AM</DataCell>
                        <div className="flex-1 flex items-center justify-center">
                          <div className="w-[13px] h-[13px] bg-white border border-[#a8a8a8]" />
                        </div>
                      </div>
                      <div className="h-[33px] border-b border-[#d0d0d0] pl-[21px] pt-[1px] text-[#5c6070] leading-[14px]">
                        <div>Dear Sybil Freeman,</div>
                        <div>Thank you for meeting with me to discuss your planned event, Summer Music Festival....</div>
                      </div>
                    </div>
                  </div>
                </div>

                {/* Summary footer */}
                <div className="h-[31px] border-t border-[#a8a8a8] pl-[486px] pt-[3px] shrink-0">
                  <div className="w-[318px] h-[24px] border border-[#a8a8a8] flex items-center justify-end pr-[5px]">1</div>
                </div>
              </div>
            </div>
          </div>
        </div>

        {/* Status bar */}
        <div className="h-[24px] bg-[#0072c6] flex items-end justify-end pr-[2px] pb-[3px] shrink-0">
          <svg viewBox="0 0 8 8" className="w-[8px] h-[8px]">
            <path d="M6 0h2v2H6zM3 3h2v2H3zM6 3h2v2H6zM0 6h2v2H0zM3 6h2v2H3zM6 6h2v2H6z" fill="#b8d4ea" />
          </svg>
        </div>
      </div>
    </div>
  );
}
